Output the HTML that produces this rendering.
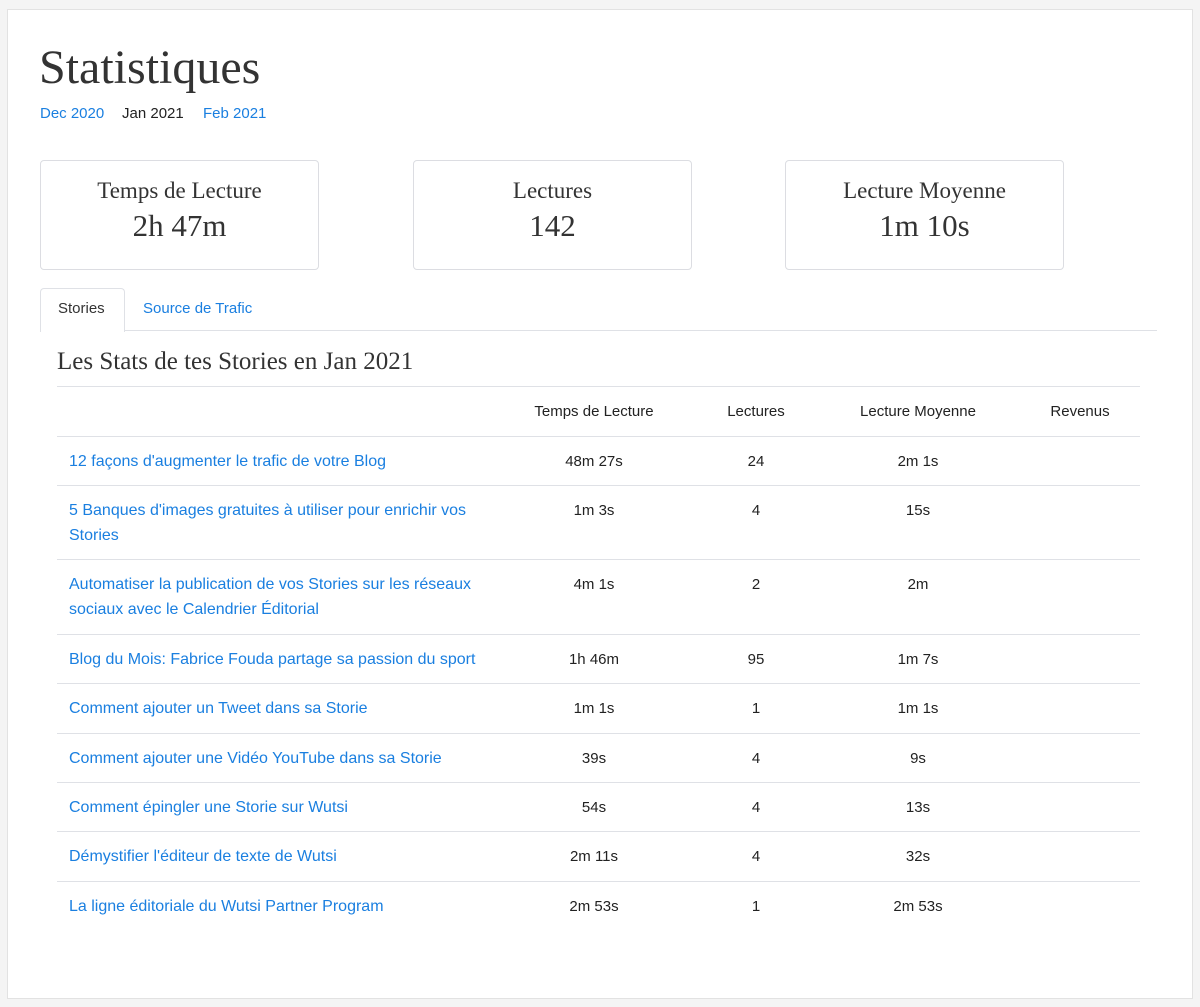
<!DOCTYPE html><html><head><meta charset="utf-8"><style>
body{margin:0;background:#f4f4f4;font-family:"Liberation Sans",sans-serif;width:1200px;height:1007px;position:relative;overflow:hidden}
.main{position:absolute;left:7px;top:9px;width:1184px;height:988px;background:#fff;border:1px solid #e2e2e2}
.a{position:absolute;white-space:nowrap}
.serif{font-family:"Liberation Serif",serif;color:#333}
.blue{color:#1a7fe0}
.card{position:absolute;top:160px;width:277px;height:108px;border:1px solid #dcdde2;border-radius:4px;text-align:center;font-family:"Liberation Serif",serif;color:#333}
.card .t{font-size:23px;margin-top:17px}
.card .v{font-size:31px;margin-top:4px}
.line{position:absolute;left:57px;width:1083px;height:1px;background:#dfe1e6}
.c{position:absolute;text-align:center;font-size:15px;color:#222;width:160px}
.l{position:absolute;left:69px;width:410px;font-size:16px;line-height:25px;color:#1a7fe0}
</style></head><body><div class="main"></div>
<div class="a serif" style="left:39px;top:40px;font-size:48px">Statistiques</div>
<div class="a blue" style="left:40px;top:105px;font-size:15px">Dec 2020</div>
<div class="a" style="left:122px;top:105px;font-size:15px;color:#222">Jan 2021</div>
<div class="a blue" style="left:203px;top:105px;font-size:15px">Feb 2021</div>
<div class="card" style="left:40px"><div class="t">Temps de Lecture</div><div class="v">2h 47m</div></div>
<div class="card" style="left:413px"><div class="t">Lectures</div><div class="v">142</div></div>
<div class="card" style="left:785px"><div class="t">Lecture Moyenne</div><div class="v">1m 10s</div></div>
<div class="a" style="left:40px;top:330px;width:1117px;height:1px;background:#dfe1e6"></div>
<div class="a" style="left:40px;top:288px;width:83px;height:43px;border:1px solid #dfe1e6;border-bottom:none;border-radius:4px 4px 0 0;background:#fff"></div>
<div class="a" style="left:58px;top:300px;font-size:15px;color:#333">Stories</div>
<div class="a blue" style="left:143px;top:300px;font-size:15px">Source de Trafic</div>
<div class="a serif" style="left:57px;top:348px;font-size:25px">Les Stats de tes Stories en Jan 2021</div>
<div class="line" style="top:386px"></div>
<div class="c" style="left:514px;top:403px">Temps de Lecture</div>
<div class="c" style="left:676px;top:403px">Lectures</div>
<div class="c" style="left:838px;top:403px">Lecture Moyenne</div>
<div class="c" style="left:1000px;top:403px">Revenus</div>
<div class="line" style="top:436px"></div>
<div class="l" style="top:449px">12 façons d'augmenter le trafic de votre Blog</div>
<div class="c" style="left:514px;top:453px">48m 27s</div><div class="c" style="left:676px;top:453px">24</div><div class="c" style="left:838px;top:453px">2m 1s</div>
<div class="line" style="top:485px"></div>
<div class="l" style="top:498px">5 Banques d'images gratuites à utiliser pour enrichir vos Stories</div>
<div class="c" style="left:514px;top:502px">1m 3s</div><div class="c" style="left:676px;top:502px">4</div><div class="c" style="left:838px;top:502px">15s</div>
<div class="line" style="top:559px"></div>
<div class="l" style="top:572px">Automatiser la publication de vos Stories sur les réseaux sociaux avec le Calendrier Éditorial</div>
<div class="c" style="left:514px;top:576px">4m 1s</div><div class="c" style="left:676px;top:576px">2</div><div class="c" style="left:838px;top:576px">2m</div>
<div class="line" style="top:634px"></div>
<div class="l" style="top:647px">Blog du Mois: Fabrice Fouda partage sa passion du sport</div>
<div class="c" style="left:514px;top:651px">1h 46m</div><div class="c" style="left:676px;top:651px">95</div><div class="c" style="left:838px;top:651px">1m 7s</div>
<div class="line" style="top:683px"></div>
<div class="l" style="top:696px">Comment ajouter un Tweet dans sa Storie</div>
<div class="c" style="left:514px;top:700px">1m 1s</div><div class="c" style="left:676px;top:700px">1</div><div class="c" style="left:838px;top:700px">1m 1s</div>
<div class="line" style="top:733px"></div>
<div class="l" style="top:746px">Comment ajouter une Vidéo YouTube dans sa Storie</div>
<div class="c" style="left:514px;top:750px">39s</div><div class="c" style="left:676px;top:750px">4</div><div class="c" style="left:838px;top:750px">9s</div>
<div class="line" style="top:782px"></div>
<div class="l" style="top:795px">Comment épingler une Storie sur Wutsi</div>
<div class="c" style="left:514px;top:799px">54s</div><div class="c" style="left:676px;top:799px">4</div><div class="c" style="left:838px;top:799px">13s</div>
<div class="line" style="top:831px"></div>
<div class="l" style="top:844px">Démystifier l'éditeur de texte de Wutsi</div>
<div class="c" style="left:514px;top:848px">2m 11s</div><div class="c" style="left:676px;top:848px">4</div><div class="c" style="left:838px;top:848px">32s</div>
<div class="line" style="top:881px"></div>
<div class="l" style="top:894px">La ligne éditoriale du Wutsi Partner Program</div>
<div class="c" style="left:514px;top:898px">2m 53s</div><div class="c" style="left:676px;top:898px">1</div><div class="c" style="left:838px;top:898px">2m 53s</div>
</body></html>
